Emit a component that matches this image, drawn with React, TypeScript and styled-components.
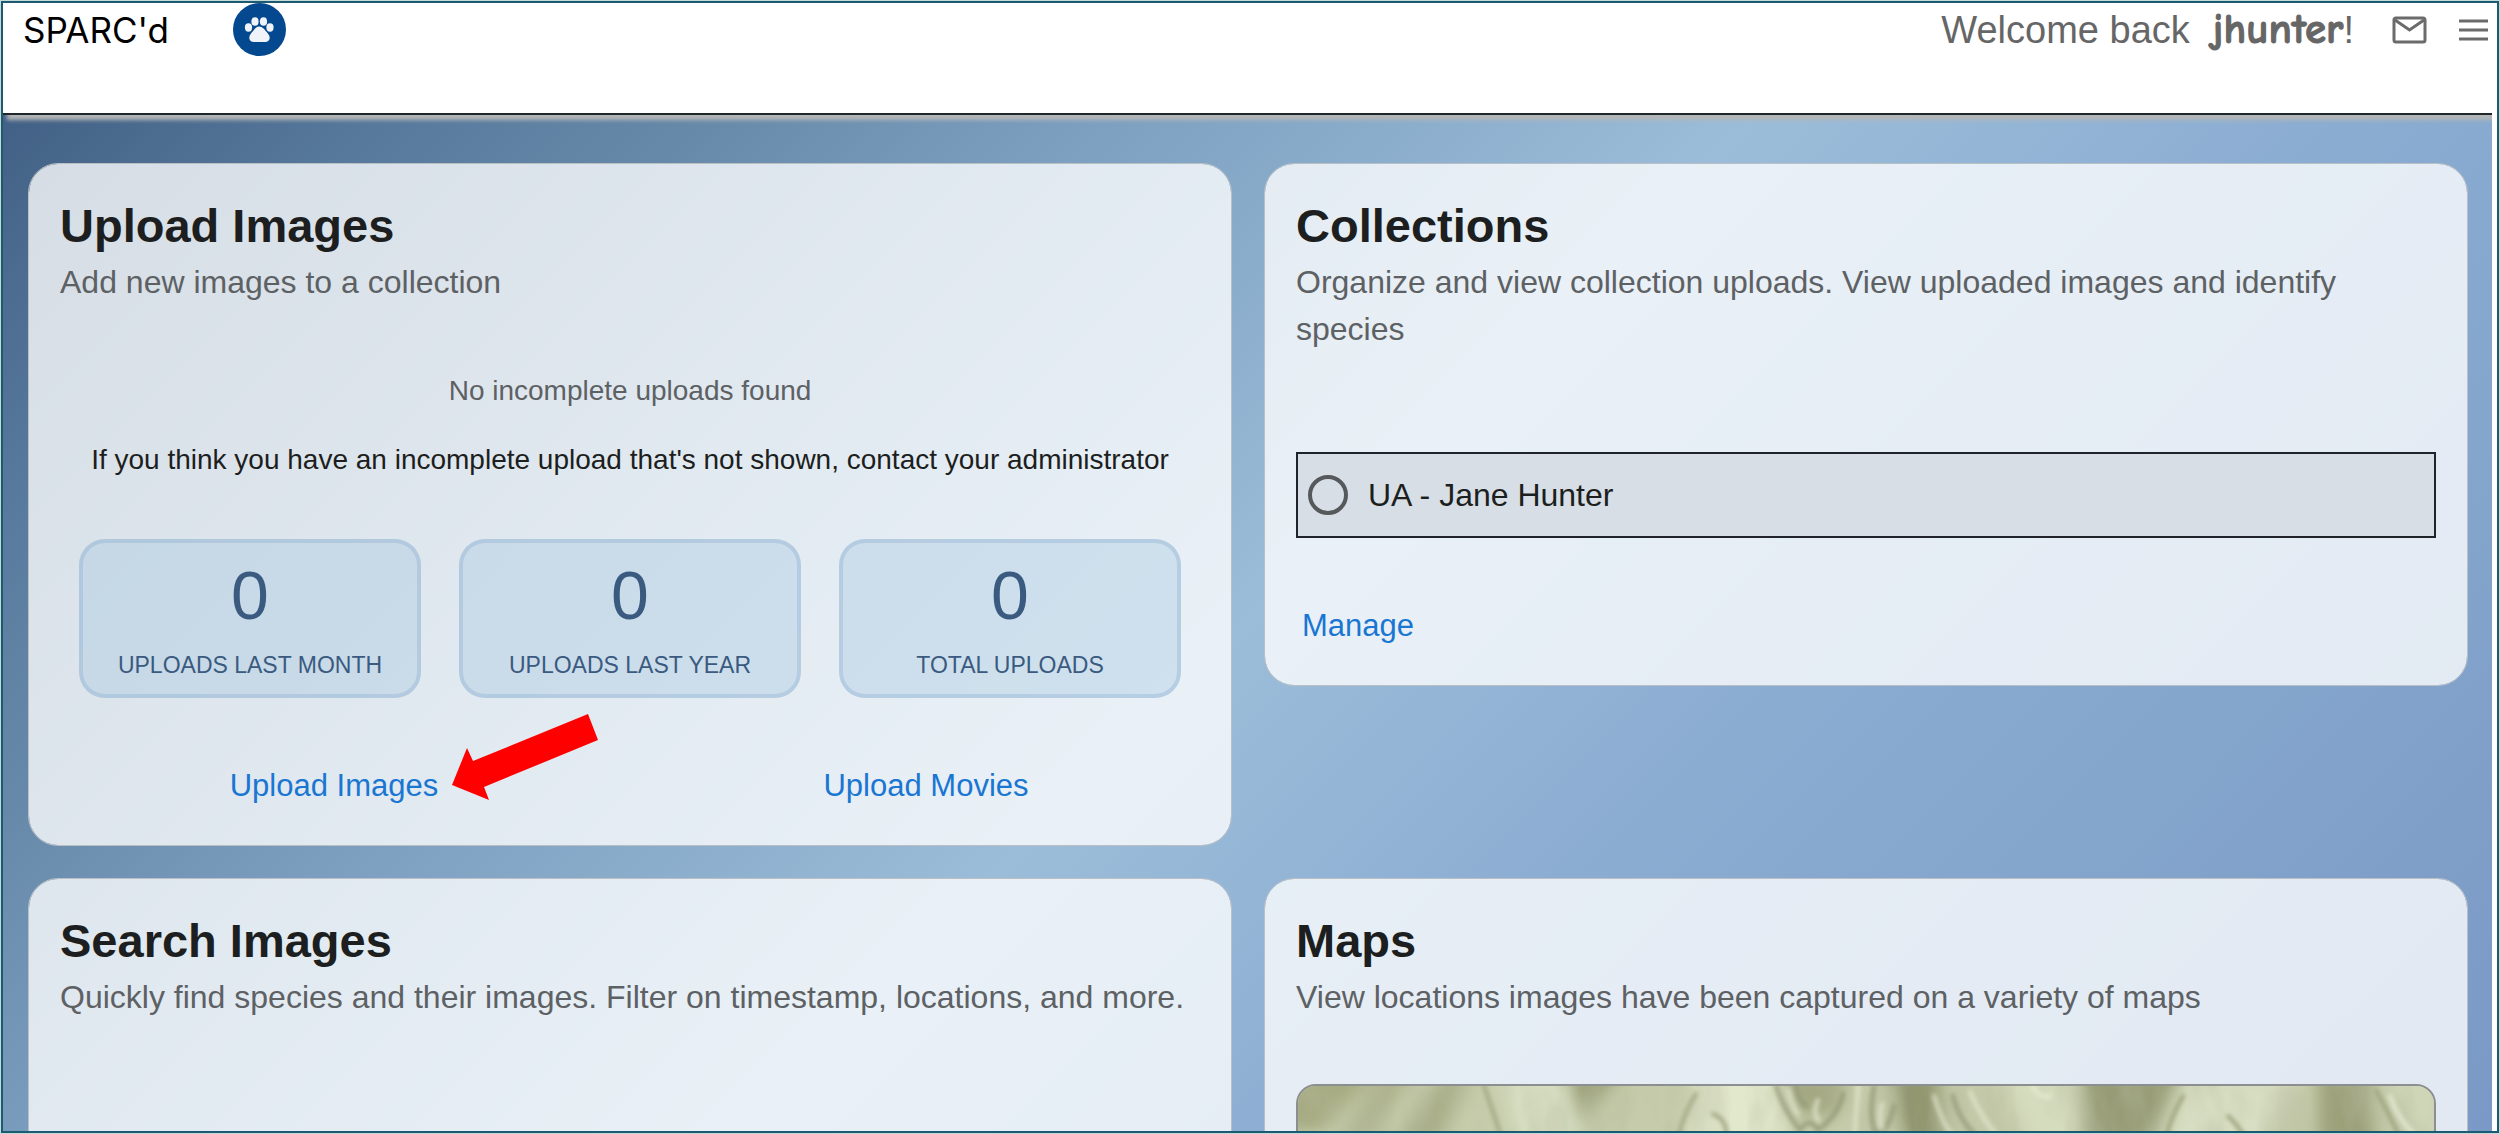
import React, { useState } from 'react';
import styled, { createGlobalStyle } from 'styled-components';

const GlobalStyle = createGlobalStyle`
  *, *::before, *::after { box-sizing: border-box; }
  body {
    margin: 0;
    font-family: "Liberation Sans", Arial, sans-serif;
    color: #1c1e20;
  }
  h1, h2, p, ul { margin: 0; padding: 0; }
`;

const Frame = styled.div`
  height: 100vh;
  padding: 1px;
  background: #c3dad9;
`;

const Screen = styled.div`
  display: flex;
  flex-direction: column;
  height: 100%;
  overflow: hidden;
  border: 2px solid #1c5a72;
  padding-right: 5px;
  background: #fff;
`;

const Header = styled.header`
  position: relative;
  z-index: 1;
  flex: none;
  display: flex;
  justify-content: space-between;
  align-items: flex-start;
  height: 112px;
  padding: 0 4px 0 20px;
  border-bottom: 2px solid #20272b;
  background: #fff;
  box-shadow: 4px 5px 4px #b4b6b6;
  clip-path: inset(0 0 -16px 0);
`;

const HeaderGroup = styled.div<{ $gap: number }>`
  display: flex;
  align-items: center;
  gap: ${(p) => p.$gap}px;
  height: 53px;
`;

const Brand = styled.h1`
  font: 400 35px/52px Inter, sans-serif;
  color: #000;
`;

const Welcome = styled.span`
  margin-right: 18px;
  font-size: 38px;
  line-height: 52px;
  color: #666;
  white-space: pre;
`;

const UserName = styled.b`
  margin-left: 12px;
  font-family: "Comic Sans MS", "Comic Neue", "Open Sans", sans-serif;
  font-size: 43px;
  line-height: 1;
  font-weight: 700;
  -webkit-text-stroke: 1px #666;
`;

const IconButton = styled.button`
  display: flex;
  padding: 0;
  border: 0;
  background: none;
  color: #6b6b6b;
  cursor: pointer;
`;

const Main = styled.main`
  flex: 1;
  min-height: 0;
  overflow: hidden;
  display: grid;
  grid-template-columns: 1fr 1fr;
  grid-auto-rows: max-content;
  align-items: start;
  gap: 32px;
  padding: 48px 24px 48px 25px;
  background: linear-gradient(
    135deg,
    #426085 0%,
    #55779a 10%,
    #6789a9 20%,
    #7c9fc0 31%,
    #9bbdd9 50%,
    #8cadd2 66%,
    #83a4cb 82%,
    #7a99c6 100%
  );
`;

const Card = styled.section`
  display: flex;
  flex-direction: column;
  padding: 32px 31px 35px;
  border: 1px solid #b9bfc5;
  border-radius: 30px;
  background: rgba(255, 255, 255, 0.78);
  background-clip: padding-box;
`;

const CardTitle = styled.h2`
  font-size: 47px;
  line-height: 60px;
  font-weight: 700;
`;

const CardText = styled.p`
  margin-top: 3px;
  font-size: 32px;
  line-height: 47px;
  color: #5d6164;
`;

const Notice = styled.div`
  display: flex;
  flex-direction: column;
  gap: 29px;
  margin-top: 65px;
  text-align: center;
`;

const NoticeText = styled.p<{ $muted?: boolean }>`
  font-size: 28px;
  line-height: 40px;
  color: ${(p) => (p.$muted ? '#5d6164' : '#1c1e20')};
`;

const Stats = styled.ul`
  display: grid;
  grid-template-columns: repeat(3, 1fr);
  gap: 38px;
  margin-top: 59px;
  padding: 0 19px;
  list-style: none;
`;

const Stat = styled.li`
  display: flex;
  flex-direction: column;
  align-items: center;
  gap: 14px;
  padding: 12px 0 13px;
  border: 4px solid rgba(112, 150, 195, 0.25);
  border-radius: 26px;
  background: rgba(160, 197, 223, 0.36);
  color: #3a5a80;
`;

const StatValue = styled.span`
  font-size: 68px;
  line-height: 80px;
`;

const StatLabel = styled.span`
  font-size: 23px;
  line-height: 32px;
  text-transform: uppercase;
`;

const Actions = styled.div<{ $columns: number }>`
  display: grid;
  grid-template-columns: repeat(${(p) => p.$columns}, 1fr);
  justify-items: ${(p) => (p.$columns > 1 ? 'center' : 'start')};
  gap: 44px;
  margin-top: 64px;
  padding-left: ${(p) => (p.$columns > 1 ? 0 : 6)}px;
`;

const Action = styled.a`
  position: relative;
  font-size: 31px;
  line-height: 48px;
  color: #1976d2;
  text-decoration: none;
`;

const Pointer = styled.svg`
  position: absolute;
  left: 100%;
  bottom: 9px;
  margin-left: 13px;
`;

const Option = styled.label`
  display: flex;
  align-items: center;
  gap: 20px;
  height: 86px;
  margin-top: 99px;
  padding-left: 10px;
  border: 2px solid #20242a;
  background: #d7dee5;
  font-size: 32px;
  cursor: pointer;
`;

const Radio = styled.input`
  appearance: none;
  width: 40px;
  height: 40px;
  margin: 0;
  border: 4px solid #55595c;
  border-radius: 50%;
  &:checked { background: radial-gradient(#1976d2 45%, transparent 50%); }
`;

const MapFrame = styled.div`
  height: 400px;
  margin-top: 63px;
  overflow: hidden;
  border: 2px solid #8b8f91;
  border-radius: 20px;
  background: #c3c9a6;
`;

const Filler = styled.div`
  height: 400px;
`;

function Paw() {
  return (
    <svg width="53" height="53" viewBox="0 0 53 53" role="img" aria-label="Paw logo">
      <circle cx="26.5" cy="26.5" r="26.5" fill="#04488f" />
      <g fill="#f0f4f8">
        <ellipse cx="15.5" cy="24.5" rx="3.6" ry="4.2" />
        <ellipse cx="22" cy="18.5" rx="3.6" ry="4.3" />
        <ellipse cx="30.5" cy="18.5" rx="3.6" ry="4.3" />
        <ellipse cx="37" cy="24.5" rx="3.6" ry="4.2" />
        <path d="M26.3 23.5c3 0 4.600 2.200 6.400 4.500 1.800 2.200 4 4.100 4 6.700 0 3.300-3 4.500-6 4.400h-9c-3 0.100-5.400-1.500-5.400-4.400 0-2.700 2-4.500 3.800-6.700 1.900-2.300 3.200-4.500 6.200-4.500z" />
      </g>
    </svg>
  );
}

function Terrain() {
  return (
    <svg width="100%" height="400" viewBox="0 0 1136 400" preserveAspectRatio="xMidYMin slice" role="img" aria-label="Terrain map">
      <defs>
        <filter id="soft" x="-20%" y="-20%" width="140%" height="140%">
          <feGaussianBlur stdDeviation="9" />
        </filter>
        <filter id="fine" x="-20%" y="-20%" width="140%" height="140%">
          <feGaussianBlur stdDeviation="2" />
        </filter>
        <filter id="grain" x="0" y="0" width="100%" height="100%">
          <feTurbulence type="fractalNoise" baseFrequency="0.028 0.012" numOctaves="3" seed="7" />
          <feColorMatrix values="0 0 0 0 0.47  0 0 0 0 0.49  0 0 0 0 0.34  4 0 0 0 -1.7" />
        </filter>
      </defs>
      <rect width="1136" height="400" fill="#c6ccab" />
      <g filter="url(#soft)">
        <path d="M-20 -20H85L20 48H-20z" fill="#a5aa80" />
        <path d="M150 -20L95 60H140L175 -20z" fill="#a9ae88" />
        <path d="M85 -20L40 60H70L120 -20z" fill="#adb28c" />
        <path d="M200 -20H270L290 80H225z" fill="#d8dfc2" />
        <path d="M265 -20H330L282 35z" fill="#9a9f76" />
        <path d="M400 -20H480L490 80H385z" fill="#e2e8cc" />
        <path d="M480 -20H550L540 30H500z" fill="#a4a983" />
        <path d="M590 -20H640L650 80H612z" fill="#92976f" />
        <path d="M700 -20H770L800 80H740z" fill="#d5dbbd" />
        <path d="M785 -20H885L840 80H785z" fill="#979c76" />
        <path d="M895 -20H1000L960 80H860z" fill="#d8dec3" />
        <path d="M1020 -20H1070L1080 80H1020z" fill="#9ca17a" />
        <path d="M1085 -20H1150V80H1120z" fill="#cfd5b7" />
        <path d="M0 45L60 80H0z" fill="#dce2c6" />
      </g>
      <rect width="1136" height="400" filter="url(#grain)" opacity="0.3" />
      <g filter="url(#fine)" fill="none" strokeLinecap="round">
        <path d="M186 0Q195 25 206 60M398 8Q384 30 378 60M415 28Q432 34 428 60" stroke="#a4aa86" strokeWidth="4" />
        <path d="M478 0Q488 28 502 44Q512 30 520 44Q540 30 545 8M498 0Q500 14 508 20M576 0Q570 30 578 48Q590 46 596 20M610 4Q612 40 624 60M655 10Q662 40 690 60" stroke="#8f9472" strokeWidth="5" opacity="0.7" />
        <path d="M490 4Q494 20 500 28M520 14Q514 26 520 34M584 18Q580 34 584 42M560 0L556 60M636 10Q645 40 656 50M672 6Q684 34 700 50" stroke="#e3e9d0" strokeWidth="4" opacity="0.8" />
        <path d="M885 10Q870 36 866 60M930 30Q945 44 950 60M1078 4Q1092 30 1104 56" stroke="#9fa47e" strokeWidth="4" />
        <path d="M1092 10Q1100 34 1118 50M734 0Q742 14 752 10" stroke="#e3e9d0" strokeWidth="4" />
      </g>
    </svg>
  );
}

const stats = [
  { label: 'Uploads last month', value: 0 },
  { label: 'Uploads last year', value: 0 },
  { label: 'Total uploads', value: 0 },
];

export default function App() {
  const [picked, setPicked] = useState(false);
  return (
    <>
      <GlobalStyle />
      <Frame>
        <Screen>
          <Header>
            <HeaderGroup $gap={64}>
              <Brand>SPARC'd</Brand>
              <Paw />
            </HeaderGroup>
            <HeaderGroup $gap={20}>
              <Welcome>
                Welcome back <UserName>jhunter</UserName>!
              </Welcome>
              <IconButton type="button" aria-label="Messages">
                <svg width="36" height="28" viewBox="0 0 36 28" fill="none" stroke="currentColor" strokeWidth="3">
                  <rect x="2" y="2" width="31" height="24" rx="2" />
                  <path d="M3 4l14.500 10L32 4" />
                </svg>
              </IconButton>
              <IconButton type="button" aria-label="Menu">
                <svg width="40" height="22" viewBox="0 0 40 22" stroke="currentColor" strokeWidth="3">
                  <path d="M11 2h29M11 11h29M11 20h29" />
                </svg>
              </IconButton>
            </HeaderGroup>
          </Header>
          <Main>
            <Card>
              <CardTitle>Upload Images</CardTitle>
              <CardText>Add new images to a collection</CardText>
              <Notice>
                <NoticeText $muted>No incomplete uploads found</NoticeText>
                <NoticeText>
                  If you think you have an incomplete upload that's not shown, contact your administrator
                </NoticeText>
              </Notice>
              <Stats>
                {stats.map((s) => (
                  <Stat key={s.label}>
                    <StatValue>{s.value}</StatValue>
                    <StatLabel>{s.label}</StatLabel>
                  </Stat>
                ))}
              </Stats>
              <Actions $columns={2}>
                <Action href="#upload-images">
                  Upload Images
                  <Pointer width="148" height="88" viewBox="0 0 148 88" aria-hidden="true">
                    <path d="M1 72L16 35L22 48L137 1L147 27L33 74L38 87z" fill="#f00" />
                  </Pointer>
                </Action>
                <Action href="#upload-movies">Upload Movies</Action>
              </Actions>
            </Card>
            <Card>
              <CardTitle>Collections</CardTitle>
              <CardText>
                Organize and view collection uploads. View uploaded images and identify species
              </CardText>
              <Option>
                <Radio type="radio" name="collection" checked={picked} onChange={() => setPicked(true)} />
                UA - Jane Hunter
              </Option>
              <Actions $columns={1}>
                <Action href="#manage">Manage</Action>
              </Actions>
            </Card>
            <Card>
              <CardTitle>Search Images</CardTitle>
              <CardText>
                Quickly find species and their images. Filter on timestamp, locations, and more.
              </CardText>
              <Filler />
            </Card>
            <Card>
              <CardTitle>Maps</CardTitle>
              <CardText>View locations images have been captured on a variety of maps</CardText>
              <MapFrame>
                <Terrain />
              </MapFrame>
            </Card>
          </Main>
        </Screen>
      </Frame>
    </>
  );
}
